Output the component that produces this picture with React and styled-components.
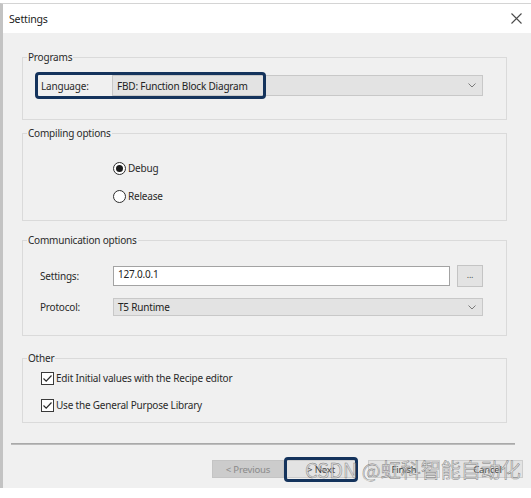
import React from 'react';
import styled, { createGlobalStyle } from 'styled-components';

const GlobalStyle = createGlobalStyle`
  html, body { margin: 0; padding: 0; background: #ffffff; }
  body { font-family: "Noto Sans", "Liberation Sans", sans-serif; }
  * { box-sizing: border-box; }
`;

const Window = styled.div`
  position: relative;
  width: 531px;
  height: 485px;
  margin-top: 3px;
  border-top: 1px solid #d4d4d4;
  border-left: 3px solid #c3c3c3;
  display: flex;
  flex-direction: column;
  font-size: 10px;
  letter-spacing: -0.2px;
  color: #2a2a2a;
`;

const TitleBar = styled.div`
  height: 29px;
  flex: none;
  background: #ffffff;
  display: flex;
  align-items: center;
  justify-content: space-between;
  padding: 0 9px 0 6px;
  font-size: 10.6px;
  color: #1a1a1a;
`;

const Body = styled.div`
  flex: 1;
  background: #f0f0f0;
  padding-top: 17px;
  display: flex;
  flex-direction: column;
`;

const Groups = styled.div`
  padding: 0 24px 0 19px;
  display: flex;
  flex-direction: column;
`;

const Group = styled.fieldset`
  margin: ${(p) => p.$mt || 0}px 0 0 0;
  padding: 0;
  border: 1px solid #dadada;
  min-inline-size: 0;
`;

const Legend = styled.legend`
  margin-left: 4px;
  padding: 0 1px;
  line-height: 14px;
  font-size: 10px;
  color: #2a2a2a;
`;

const GroupContent = styled.div`
  padding: ${(p) => p.$pt}px 23px ${(p) => p.$pb}px 18px;
  display: flex;
  flex-direction: column;
  gap: ${(p) => p.$gap || 0}px;
`;

const FieldRow = styled.div`
  position: relative;
  display: grid;
  grid-template-columns: ${(p) => p.$labelW || 72}px 1fr;
  align-items: center;
  height: ${(p) => p.$h}px;
`;

const FieldLabel = styled.span`
  line-height: 14px;
  margin-left: ${(p) => p.$ml || 0}px;
`;

const Select = styled.div`
  height: ${(p) => p.$h}px;
  background: #e3e3e3;
  border: 1px solid #c8c8c8;
  display: flex;
  align-items: center;
  justify-content: space-between;
  padding: 0 6px 0 4px;
  color: #222;
`;

const Highlight = styled.div`
  position: absolute;
  left: ${(p) => p.$l}px;
  top: ${(p) => p.$t}px;
  width: ${(p) => p.$w}px;
  height: ${(p) => p.$hh}px;
  border: 3px solid #14335c;
  border-radius: 4px;
  pointer-events: none;
`;

const InputWrap = styled.div`
  display: flex;
  align-items: center;
  gap: 7px;
`;

const TextInput = styled.div`
  flex: 1;
  height: 20px;
  background: #ffffff;
  border: 1px solid #a3a3a3;
  padding: 1px 4px 0 4px;
  line-height: 12px;
  color: #222;
`;

const SmallButton = styled.div`
  width: 26px;
  height: 22px;
  background: #e3e3e3;
  border: 1px solid #c4c4c4;
  display: flex;
  align-items: center;
  justify-content: center;
  font-size: 9px;
  color: #555;
  padding-bottom: 3px;
`;

const OptionRow = styled.label`
  display: flex;
  align-items: center;
  gap: 2px;
  height: ${(p) => p.$h}px;
  margin-left: ${(p) => p.$ml || 0}px;
  line-height: 14px;
`;

const Radio = styled.span`
  width: 13px;
  height: 13px;
  border-radius: 50%;
  border: 1px solid #2e2e2e;
  background: #ffffff;
  display: flex;
  align-items: center;
  justify-content: center;
  &::after {
    content: '';
    display: ${(p) => (p.$checked ? 'block' : 'none')};
    width: 7px;
    height: 7px;
    border-radius: 50%;
    background: #1c1c1c;
  }
`;

const Check = styled.span`
  width: 13px;
  height: 13px;
  border: 1px solid #3a3a3a;
  background: #ffffff;
  display: flex;
  align-items: center;
  justify-content: center;
`;

const Footer = styled.div`
  padding: 0 8px 0 8px;
  display: flex;
  flex-direction: column;
`;

const Separator = styled.div`
  margin: 20px 8px 0 0;
  height: 2px;
  background: #bcbcbc;
  border-top: 1px solid #a9a9a9;
`;

const ButtonRow = styled.div`
  margin-top: 15px;
  display: flex;
  justify-content: flex-end;
`;

const ButtonSlot = styled.div`
  position: relative;
  margin-left: ${(p) => p.$ml || 0}px;
`;

const Button = styled.div`
  width: ${(p) => p.$w || 72}px;
  height: 18px;
  display: flex;
  align-items: center;
  justify-content: center;
  background: ${(p) => (p.$disabled ? '#cccccc' : '#e3e3e3')};
  border: 1px solid ${(p) => (p.$disabled ? '#c4c4c4' : '#cdcdcd')};
  color: ${(p) => (p.$disabled ? '#8a8a8a' : '#444444')};
  font-size: 9.6px;
`;

const Watermark = styled.div`
  position: absolute;
  left: 302px;
  top: 454px;
  font-family: "Noto Sans CJK SC", "Noto Sans", sans-serif;
  font-size: 20px;
  line-height: 24px;
  letter-spacing: 0;
  white-space: nowrap;
  color: rgba(215, 215, 215, 0.55);
  -webkit-text-stroke: 0.45px rgba(95, 95, 95, 0.8);
  pointer-events: none;
`;

const Chevron = () => (
  <svg width="8" height="5" viewBox="0 0 8 5">
    <polyline points="0.5,0.5 4,4 7.5,0.5" fill="none" stroke="#7a7a7a" strokeWidth="1" />
  </svg>
);

const CloseIcon = () => (
  <svg width="11" height="11" viewBox="0 0 11 11">
    <path d="M0.5 0.5 L10.5 10.5 M10.5 0.5 L0.5 10.5" stroke="#4a4a4a" strokeWidth="1.1" />
  </svg>
);

const CheckMark = () => (
  <svg width="11" height="11" viewBox="0 0 11 11">
    <polyline points="1.5,5.5 4.2,8.2 9.5,2.5" fill="none" stroke="#2a2a2a" strokeWidth="1.2" />
  </svg>
);

export default function App() {
  return (
    <>
      <GlobalStyle />
      <Window>
        <TitleBar>
          <span>Settings</span>
          <CloseIcon />
        </TitleBar>
        <Body>
          <Groups>
            <Group>
              <Legend>Programs</Legend>
              <GroupContent $pt={11} $pb={23}>
                <FieldRow $h={21} $labelW={71}>
                  <FieldLabel>Language:</FieldLabel>
                  <Select $h={21}>
                    <span>FBD: Function Block Diagram</span>
                    <Chevron />
                  </Select>
                  <Highlight $l={-6} $t={-3} $w={231} $hh={27} />
                </FieldRow>
              </GroupContent>
            </Group>

            <Group $mt={6}>
              <Legend>Compiling options</Legend>
              <GroupContent $pt={18} $pb={14} $gap={8}>
                <OptionRow $h={20} $ml={72}>
                  <Radio $checked />
                  <span>Debug</span>
                </OptionRow>
                <OptionRow $h={20} $ml={72}>
                  <Radio />
                  <span>Release</span>
                </OptionRow>
              </GroupContent>
            </Group>

            <Group $mt={12}>
              <Legend>Communication options</Legend>
              <GroupContent $pt={18} $pb={19} $gap={11}>
                <FieldRow $h={22}>
                  <FieldLabel $ml={-1}>Settings:</FieldLabel>
                  <InputWrap>
                    <TextInput>127.0.0.1</TextInput>
                    <SmallButton>...</SmallButton>
                  </InputWrap>
                </FieldRow>
                <FieldRow $h={18}>
                  <FieldLabel $ml={-1}>Protocol:</FieldLabel>
                  <Select $h={18}>
                    <span>T5 Runtime</span>
                    <Chevron />
                  </Select>
                </FieldRow>
              </GroupContent>
            </Group>

            <Group $mt={15}>
              <Legend>Other</Legend>
              <GroupContent $pt={4} $pb={8} $gap={9}>
                <OptionRow $h={18}>
                  <Check><CheckMark /></Check>
                  <span>Edit Initial values with the Recipe editor</span>
                </OptionRow>
                <OptionRow $h={18}>
                  <Check><CheckMark /></Check>
                  <span>Use the General Purpose Library</span>
                </OptionRow>
              </GroupContent>
            </Group>
          </Groups>

          <Footer>
            <Separator />
            <ButtonRow>
              <ButtonSlot>
                <Button $disabled>&lt; Previous</Button>
              </ButtonSlot>
              <ButtonSlot $ml={1}>
                <Button>&gt; Next</Button>
                <Highlight $l={-1} $t={-3} $w={74} $hh={25} />
              </ButtonSlot>
              <ButtonSlot $ml={11}>
                <Button>Finish</Button>
              </ButtonSlot>
              <ButtonSlot $ml={12}>
                <Button $w={71}>Cancel</Button>
              </ButtonSlot>
            </ButtonRow>
          </Footer>
        </Body>
        <Watermark>CSDN @虹科智能自动化</Watermark>
      </Window>
    </>
  );
}
